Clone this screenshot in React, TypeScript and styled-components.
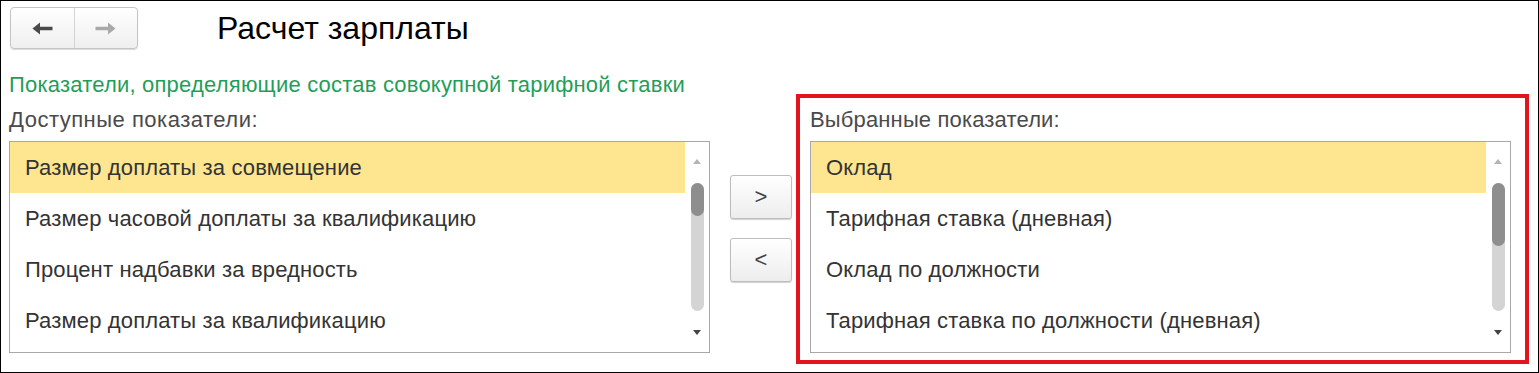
import React from "react";
import styled, { createGlobalStyle } from "styled-components";

const Global = createGlobalStyle`
  html, body { margin: 0; padding: 0; background: #fff; }
  body { font-family: "Liberation Sans", Arial, sans-serif; }
  * { box-sizing: border-box; }
`;

const Frame = styled.div`
  width: 1539px;
  height: 373px;
  border: 1px solid #000;
  background: #fff;
  display: flex;
  flex-direction: column;
`;

const Header = styled.div`
  display: flex;
  align-items: center;
  height: 52px;
  padding-left: 9px;
  padding-top: 2px;
`;

const NavGroup = styled.div`
  display: flex;
  width: 128px;
  height: 42px;
  border: 1px solid #c4c4c4;
  border-radius: 4px;
  background: linear-gradient(#ffffff, #efefef);
  box-shadow: 0 1px 1px rgba(0, 0, 0, 0.15);
  overflow: hidden;
`;

const NavButton = styled.div<{ $divider?: boolean }>`
  flex: 1;
  display: flex;
  align-items: center;
  justify-content: center;
  border-right: ${(p) => (p.$divider ? "1px solid #d4d4d4" : "none")};
`;

const Title = styled.h1`
  margin: 0 0 0 79px;
  font-size: 32px;
  line-height: 36px;
  font-weight: normal;
  color: #000;
`;

const GroupTitle = styled.div`
  margin: 20px 0 0 8px;
  height: 21px;
  font-size: 22px;
  line-height: 24px;
  letter-spacing: 0.2px;
  color: #1f9e5a;
  white-space: nowrap;
`;

const MainRow = styled.div`
  display: flex;
  align-items: flex-start;
  padding-left: 8px;
`;

const Column = styled.div`
  display: flex;
  flex-direction: column;
`;

const FieldLabel = styled.div<{ $indent: number }>`
  height: 47px;
  padding: 14px 0 0 ${(p) => p.$indent}px;
  font-size: 22px;
  line-height: 24px;
  letter-spacing: 0.5px;
  color: #4a4a4a;
  white-space: nowrap;
`;

const ListBox = styled.div<{ $width: number }>`
  width: ${(p) => p.$width}px;
  height: 212px;
  border: 1px solid #a8a8a8;
  display: flex;
  background: #fff;
`;

const Rows = styled.div`
  flex: 1;
  display: flex;
  flex-direction: column;
`;

const Row = styled.div<{ $selected?: boolean }>`
  height: 51px;
  padding-left: 15px;
  display: flex;
  align-items: center;
  font-size: 22px;
  letter-spacing: 0.15px;
  color: #333;
  white-space: nowrap;
  background: ${(p) => (p.$selected ? "#fde68f" : "transparent")};
`;

const ScrollBar = styled.div`
  width: 24px;
  display: flex;
  flex-direction: column;
  align-items: center;
  padding-top: 17px;
`;

const Arrow = styled.div<{ $dir: "up" | "down"; $dark?: boolean }>`
  width: 0;
  height: 0;
  border-left: 4px solid transparent;
  border-right: 4px solid transparent;
  ${(p) =>
    p.$dir === "up"
      ? `border-bottom: 5px solid ${p.$dark ? "#444" : "#b4b4b4"};`
      : `border-top: 5px solid ${p.$dark ? "#444" : "#b4b4b4"};`}
`;

const Track = styled.div`
  margin-top: 19px;
  width: 13px;
  height: 128px;
  border-radius: 7px;
  background: #d4d4d4;
  display: flex;
  flex-direction: column;
`;

const Thumb = styled.div<{ $h: number }>`
  height: ${(p) => p.$h}px;
  border-radius: 7px;
  background: #8e8e8e;
`;

const DownSlot = styled.div`
  margin-top: 19px;
`;

const Middle = styled.div`
  width: 86px;
  padding: 81px 0 0 20px;
  display: flex;
  flex-direction: column;
  gap: 19px;
`;

const MoveButton = styled.div`
  width: 62px;
  height: 44px;
  border: 1px solid #bdbdbd;
  border-radius: 3px;
  background: linear-gradient(#ffffff, #ededed);
  box-shadow: 0 1px 1px rgba(0, 0, 0, 0.18);
  display: flex;
  align-items: center;
  justify-content: center;
  font-size: 22px;
  color: #444;
`;

const Highlight = styled.div`
  border: 4px solid #e4141f;
  width: 733px;
  height: 270px;
  padding: 0 0 0 10px;
  display: flex;
  flex-direction: column;
`;

const HighlightLabel = styled(FieldLabel)`
  height: 43px;
  padding-top: 10px;
  letter-spacing: 0.15px;
`;

const ArrowIcon = ({ dir, color }: { dir: "left" | "right"; color: string }) => (
  <svg width="21" height="13" viewBox="0 0 21 13">
    <g transform={dir === "right" ? "translate(21,0) scale(-1,1)" : undefined}>
      <path d="M0.5 6.5 L8 0.5 L8 4.8 L20.5 4.8 L20.5 8.2 L8 8.2 L8 12.5 Z" fill={color} />
    </g>
  </svg>
);

type ListProps = { items: string[]; width: number; thumb: number };

const List = ({ items, width, thumb }: ListProps) => (
  <ListBox $width={width}>
    <Rows>
      {items.map((t, i) => (
        <Row key={t} $selected={i === 0}>
          {t}
        </Row>
      ))}
    </Rows>
    <ScrollBar>
      <Arrow $dir="up" />
      <Track>
        <Thumb $h={thumb} />
      </Track>
      <DownSlot>
        <Arrow $dir="down" $dark />
      </DownSlot>
    </ScrollBar>
  </ListBox>
);

const available = [
  "Размер доплаты за совмещение",
  "Размер часовой доплаты за квалификацию",
  "Процент надбавки за вредность",
  "Размер доплаты за квалификацию",
];

const selected = [
  "Оклад",
  "Тарифная ставка (дневная)",
  "Оклад по должности",
  "Тарифная ставка по должности (дневная)",
];

export default function App() {
  return (
    <>
      <Global />
      <Frame>
        <Header>
          <NavGroup>
            <NavButton $divider>
              <ArrowIcon dir="left" color="#4a4a4a" />
            </NavButton>
            <NavButton>
              <ArrowIcon dir="right" color="#a9a9a9" />
            </NavButton>
          </NavGroup>
          <Title>Расчет зарплаты</Title>
        </Header>
        <GroupTitle>Показатели, определяющие состав совокупной тарифной ставки</GroupTitle>
        <MainRow>
          <Column>
            <FieldLabel $indent={0}>Доступные показатели:</FieldLabel>
            <List items={available} width={701} thumb={33} />
          </Column>
          <Middle>
            <MoveButton>&gt;</MoveButton>
            <MoveButton>&lt;</MoveButton>
          </Middle>
          <Highlight>
            <HighlightLabel $indent={0}>Выбранные показатели:</HighlightLabel>
            <List items={selected} width={701} thumb={63} />
          </Highlight>
        </MainRow>
      </Frame>
    </>
  );
}
